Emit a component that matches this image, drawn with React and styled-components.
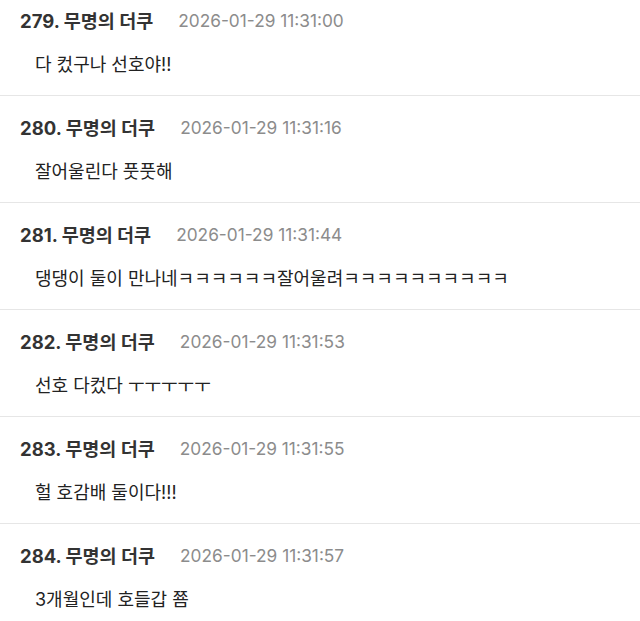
import React from "react";
import styled, { createGlobalStyle } from "styled-components";

const GlobalStyle = createGlobalStyle`
  html, body {
    margin: 0;
    padding: 0;
    background: #ffffff;
    overflow: hidden;
  }
  body {
    font-family: "Inter", "Noto Sans CJK KR", sans-serif;
  }
`;

const List = styled.ul`
  list-style: none;
  margin: -11px 0 0 0;
  padding: 0;
`;

const Item = styled.li`
  padding: 19px 0 18px 0;
  border-bottom: 1px solid #e6e6e6;
`;

const Header = styled.div`
  display: flex;
  align-items: center;
  gap: 25px;
  padding-left: 20px;
  height: 24px;
`;

const Name = styled.span`
  font-size: 18.5px;
  font-weight: 700;
  color: #333333;
`;

const Date = styled.span`
  font-size: 17.3px;
  color: #8c8c8c;
`;

const Body = styled.p`
  margin: 21px 0 0 0;
  padding-left: 35px;
  font-size: 18px;
  line-height: 24px;
  color: #222222;
`;

const comments = [
  { no: 279, date: "2026-01-29 11:31:00", text: "다 컸구나 선호야!!" },
  { no: 280, date: "2026-01-29 11:31:16", text: "잘어울린다 풋풋해" },
  {
    no: 281,
    date: "2026-01-29 11:31:44",
    text: "댕댕이 둘이 만나네ㅋㅋㅋㅋㅋㅋ잘어울려ㅋㅋㅋㅋㅋㅋㅋㅋㅋㅋ",
  },
  { no: 282, date: "2026-01-29 11:31:53", text: "선호 다컸다 ㅜㅜㅜㅜㅜ" },
  { no: 283, date: "2026-01-29 11:31:55", text: "헐 호감배 둘이다!!!" },
  { no: 284, date: "2026-01-29 11:31:57", text: "3개월인데 호들갑 쬼" },
];

export default function App() {
  return (
    <>
      <GlobalStyle />
      <List>
        {comments.map((c) => (
          <Item key={c.no}>
            <Header>
              <Name>{c.no}. 무명의 더쿠</Name>
              <Date>{c.date}</Date>
            </Header>
            <Body>{c.text}</Body>
          </Item>
        ))}
      </List>
    </>
  );
}
